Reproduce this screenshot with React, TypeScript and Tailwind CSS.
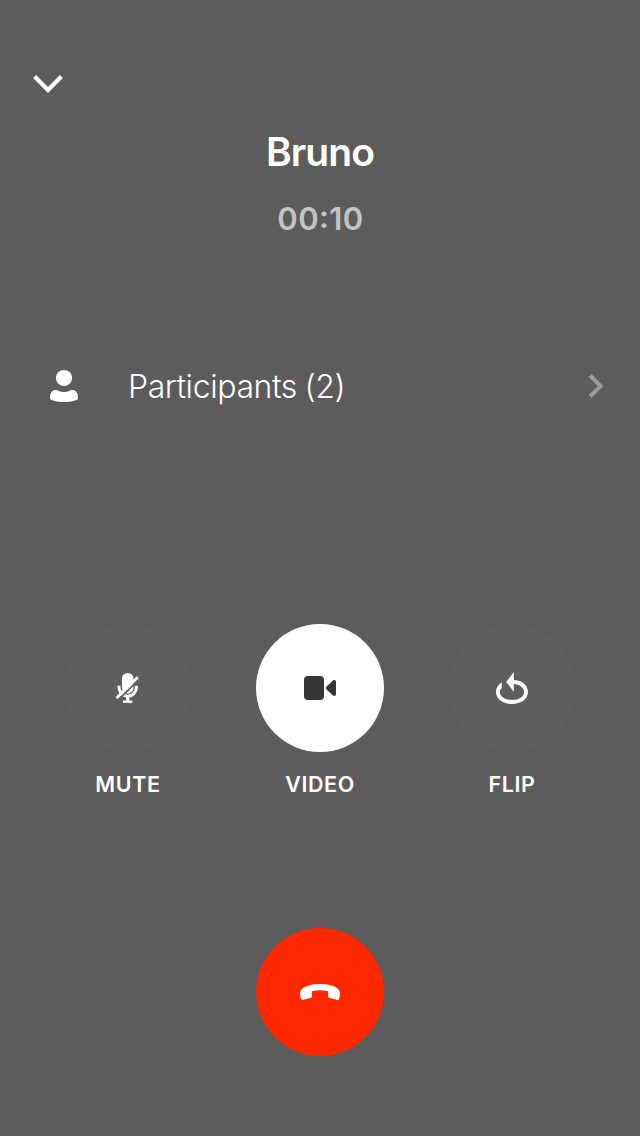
import type { ReactNode } from "react";

function ChevronDown() {
  return (
    <svg width="32" height="20" viewBox="0 0 32 20" fill="none" stroke="#fff" strokeWidth="4.200">
      <path d="M2.6 2.6 16 16 29.4 2.6" />
    </svg>
  );
}

function ChevronRight() {
  return (
    <svg width="16" height="24" viewBox="0 0 16 24" fill="none" stroke="#9b9b9b" strokeWidth="4">
      <path d="M1.2 1.5 11.600 12 1.2 22.5" />
    </svg>
  );
}

function Person() {
  return (
    <svg width="28" height="34" viewBox="0 0 28 34" fill="#fff">
      <circle cx="14" cy="9" r="8.1" />
      <path d="M5 21C7 20.6 9.500 23 14 23s7-2.400 9-2c3 .3 5 3.400 5 8 0 .8-.3 1.300-1 1.700C23.500 32.300 18.800 33 14 33S4.500 32.300 1 30.700C.3 30.300 0 29.800 0 29c0-4.600 2-7.700 5-8Z" />
    </svg>
  );
}

function MutedMic() {
  return (
    <svg width="56" height="48" viewBox="0 0 56 48" fill="none">
      <rect x="22" y="8.900" width="11.400" height="20.500" rx="5.700" fill="#fff" />
      <path d="M19 21.700V23.500a8.700 8.700 0 0 0 17.400 0V21.700" stroke="#fff" strokeWidth="3" />
      <path d="M27.700 32v6" stroke="#fff" strokeWidth="3.200" />
      <path d="M23 37.700h9.200" stroke="#fff" strokeWidth="2.400" />
      <path d="M39.300 15.200 18.300 35.800" stroke="#5e5e5e" strokeWidth="1.800" />
      <path d="M37.800 13.200 16.600 34" stroke="#fff" strokeWidth="2.800" />
    </svg>
  );
}

function Camera() {
  return (
    <svg width="56" height="48" viewBox="0 0 56 48" fill="#33373a">
      <rect x="12" y="12" width="20" height="24" rx="4" />
      <path d="M34.600 22.500 41 16.500c1-.8 3-.4 3 1.200v12.600c0 1.600-2 2-3 1.200l-6.400-6c-.9-.9-.9-2.100 0-3Z" />
    </svg>
  );
}

function Flip() {
  return (
    <svg width="56" height="48" viewBox="0 0 56 48" fill="#fff">
      <path d="M17.800 18.300v5.600c-1.300 1.100-1.900 2.500-1.900 4.100 0 4.600 5 8 12.100 8s12.100-3.400 12.100-8c0-4.400-4.500-7.600-10.300-8v7.700L22.200 18 29.800 8v8C38 16.300 44 21 44 28c0 7-6.800 12-16 12s-16-5-16-12c0-4.100 2-7.400 5.800-9.700Z" />
    </svg>
  );
}

function HangUp() {
  return (
    <svg width="42" height="18" viewBox="0 0 42 18" fill="#fff">
      <path d="M1 10.300C1 4.400 9.600 1 21 1s20 3.400 20 9.300c0 2.100-.4 4.200-1.200 6.200-.2.500-.6.600-1.200.5l-8.500-2.200c-.7-.2-1-.5-1-1.200V8.200C26.700 7.500 24 7.200 21 7.200s-5.700.3-8.100 1v5.400c0 .7-.3 1-1 1.200L3.400 17c-.6.100-1 0-1.200-.5C1.400 14.500 1 12.400 1 10.300Z" />
    </svg>
  );
}

function CallAction({ label, icon, active = false }: { label: string; icon: ReactNode; active?: boolean }) {
  return (
    <button className="flex w-32 flex-col items-center">
      <span className={`flex size-32 items-center justify-center rounded-full ${active ? "bg-white" : "bg-[#5e5e5e]"}`}>
        {icon}
      </span>
      <span className="mt-4 text-[21.5px] leading-8 font-semibold tracking-[0.6px]">{label}</span>
    </button>
  );
}

export default function App() {
  return (
    <main className="flex h-[1136px] w-[640px] flex-col bg-[#5c5c5c] font-['Inter',sans-serif] text-white">
      <header className="flex flex-col pt-[74px]">
        <button className="ml-8 w-8" aria-label="Minimize call"><ChevronDown /></button>
        <h1 className="mt-[34px] text-center text-[39px] leading-[48px] font-semibold tracking-[-0.9px]">Bruno</h1>
        <p className="mt-[23px] pl-px text-center text-[31px] leading-10 font-semibold tracking-[0.4px] text-[#c3c3c3]">
          00<span className="inline-block -translate-y-0.5">:</span>10
        </p>
      </header>
      <button className="mt-[115px] flex h-16 items-center pr-[35px] pl-[50px] text-left">
        <Person />
        <span className="ml-[50px] grow pt-px text-[32px] leading-10 font-light tracking-[-0.4px] [word-spacing:-1px]">Participants (2)</span>
        <ChevronRight />
      </button>
      <section className="mt-[206px] flex justify-between px-16">
        <CallAction label="MUTE" icon={<MutedMic />} />
        <CallAction label="VIDEO" icon={<Camera />} active />
        <CallAction label="FLIP" icon={<Flip />} />
      </section>
      <button aria-label="End call" className="mt-32 flex size-32 items-center justify-center self-center rounded-full bg-[#ff2800]">
        <HangUp />
      </button>
    </main>
  );
}
